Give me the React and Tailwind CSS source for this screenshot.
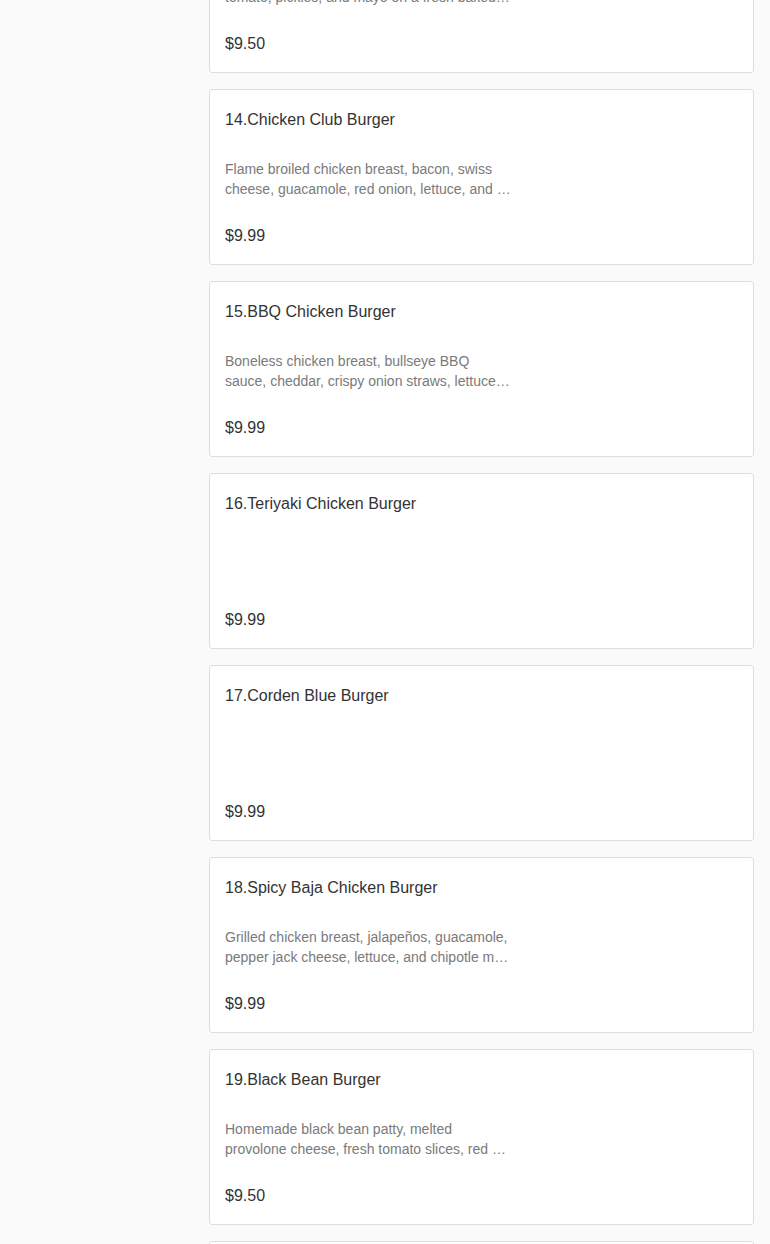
import React from 'react';

// description is stored as [first line, rest]; the rest is cut with an ellipsis
const items = [
  {
    name: '13.Grilled Chicken Burger',
    description: ['Grilled chicken breast, lettuce, red onion,', 'tomato, pickles, and mayo on a fresh baked bun.'],
    price: '$9.50'
  },
  {
    name: '14.Chicken Club Burger',
    description: ['Flame broiled chicken breast, bacon, swiss', 'cheese, guacamole, red onion, lettuce, and tomato on a fresh baked bun.'],
    price: '$9.99'
  },
  {
    name: '15.BBQ Chicken Burger',
    description: ['Boneless chicken breast, bullseye BBQ', 'sauce, cheddar, crispy onion straws, lettuce, and tomato.'],
    price: '$9.99'
  },
  { name: '16.Teriyaki Chicken Burger', description: null, price: '$9.99' },
  { name: '17.Corden Blue Burger', description: null, price: '$9.99' },
  {
    name: '18.Spicy Baja Chicken Burger',
    description: ['Grilled chicken breast, jalapeños, guacamole,', 'pepper jack cheese, lettuce, and chipotle mayo on a fresh baked bun.'],
    price: '$9.99'
  },
  {
    name: '19.Black Bean Burger',
    description: ['Homemade black bean patty, melted', 'provolone cheese, fresh tomato slices, red onion, lettuce, and mayo.'],
    price: '$9.50'
  },
  { name: '20.Turkey Burger', description: null, price: '$9.50' }
];

const MenuCard = ({ item }) => (
  <div className="h-[176px] bg-white border border-[#dedede] rounded-[3px] px-[15px] pt-[18px]">
    <h3 className="h-6 leading-6 text-[16px] text-[#333333] font-normal">{item.name}</h3>
    <div className="mt-[27px] h-10 w-[287px] text-[14px] leading-5 text-[#7a7a7a]">
      {item.description && (
        <>
          <p className="whitespace-nowrap">{item.description[0]}</p>
          <p className="truncate">{item.description[1]}</p>
        </>
      )}
    </div>
    <div className="mt-[25px] h-6 leading-6 text-[16px] text-[#333333]">{item.price}</div>
  </div>
);

export default function App() {
  return (
    <div
      className="h-[1244px] overflow-hidden bg-[#fafafa]"
      style={{ fontFamily: '"Liberation Sans", Arial, sans-serif' }}
    >
      <div className="flex">
        {/* empty left column */}
        <div className="w-[209px] shrink-0"></div>

        {/* menu list, scrolled */}
        <div className="w-[545px] mt-[-103px] flex flex-col gap-4">
          {items.map((item) => (
            <MenuCard key={item.name} item={item} />
          ))}
        </div>
      </div>
    </div>
  );
}
